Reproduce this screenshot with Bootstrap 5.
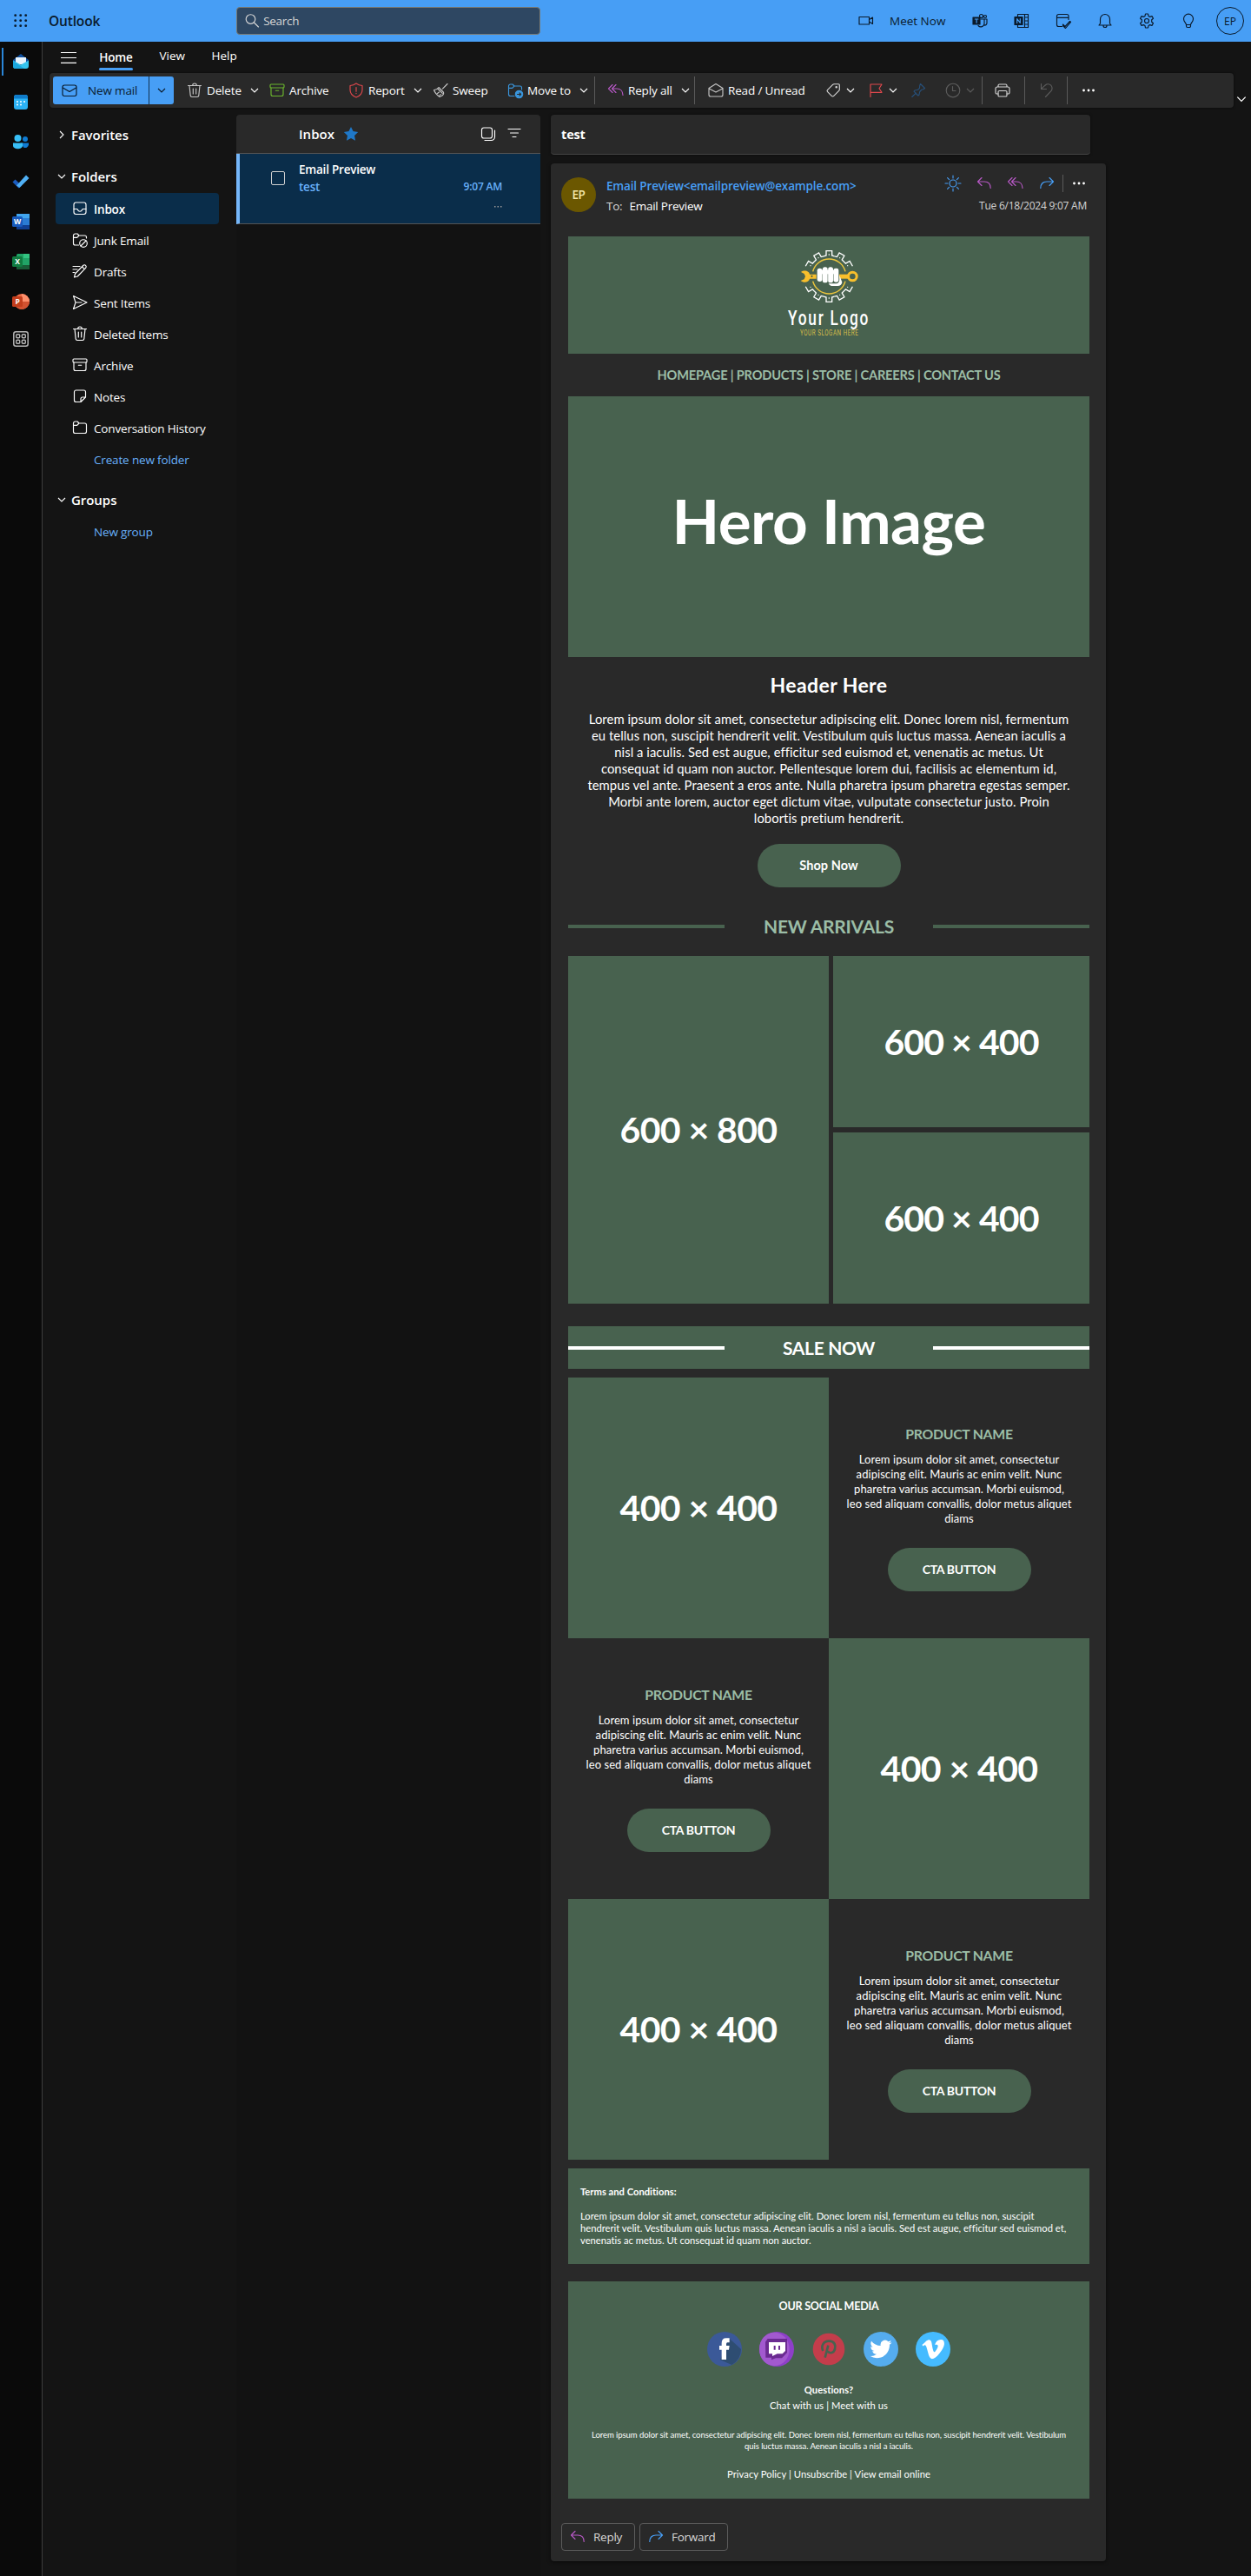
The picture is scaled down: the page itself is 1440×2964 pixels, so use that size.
<!DOCTYPE html>
<html lang="en">
<head>
<meta charset="utf-8">
<meta name="viewport" content="width=device-width, initial-scale=1">
<title>Outlook</title>
<link rel="stylesheet" href="https://cdn.jsdelivr.net/npm/bootstrap@5.3.0/dist/css/bootstrap.min.css">
<style>
body{background:#141414;color:#fff;font-family:"Open Sans","Noto Sans",sans-serif;font-size:13.5px;line-height:20px;letter-spacing:-.16px;width:1440px;height:2964px;overflow:hidden}
svg{flex:none;display:block}
.t{white-space:nowrap;display:inline-block}
.semi{font-weight:600}
.ico{width:20px;height:20px;fill:none;stroke:currentColor;stroke-width:1.15;stroke-linecap:round;stroke-linejoin:round}
.chev{width:12px;height:12px;fill:none;stroke:currentColor;stroke-width:1.1}
.chev-lg{width:14px;height:14px;margin:23px 0 0 2px}
.blu{color:#479ef5}.lblu{color:#68b0fa}.pur{color:#b658c4}.red{color:#e0484d}.grn{color:#6bb52e}
.gry{color:#c4c4c4}.txt2{color:#d6d6d6}.off{color:#5c5c5c}.offblu{color:#27507a}.mov{color:#3a96dd}

.topbar{height:48px;background:#479ef5;color:#0a1a2b}
.waffle{margin-left:16px}
.brand{font-size:15.5px;font-weight:600;margin-left:24px}
.searchbox{width:350px;height:32px;margin-left:157px;background:#2e4762;border:1px solid #7a7a72;border-radius:4px;color:#d6d6d6;letter-spacing:-.29px}
.searchbox .ico{margin:0 3px 0 7px}
.topicons{width:453px;display:grid;grid-template-columns:37px 80px repeat(7,48px);letter-spacing:0}
.me{width:32px;height:32px;border:1px solid #0a1a2b;border-radius:50%;font-size:12px;padding-top:2px}

.rail{width:49px;height:2916px;background:#0a0a0a;border-right:1px solid #3d3d3d}
.rail>div{height:46px}
.rail>div:last-child{height:40px}
.rail text{font-size:8.5px;font-weight:700;fill:#fff;text-anchor:middle}
.railmark{width:2px;height:32px;background:#2a86d8;margin-left:2px;margin-right:10px}

.tabs{height:36px;padding-left:21px}
.tab-on{margin-left:26px;padding-top:7px;width:39px;font-weight:600;line-height:16px}
.tab-on i{height:3px;width:39px;background:#479ef5;border-radius:2px;margin-top:4px}
.tab-off{margin:-4px 0 0 30.5px;letter-spacing:0}
.ribbon{width:1363px;height:40px;margin-left:8px;background:#292929;border-radius:4px;box-shadow:0 0 3px rgba(0,0,0,.6)}
.newmail{width:139px;height:32px;margin:4px 15px 4px 4px;background:#479ef5;color:#0a1a2b;border-radius:3px}
.newmail .t{margin-left:11px}
.newmail>.ico{margin-left:9px}
.nm-split{border-left:1px solid #12324f;width:29px;height:32px}
.tools{display:grid;grid-template-columns:95px 91px 97px 86px 100px 16px 99px 16px 135px 49px 49px 40px 42px 15px 34px 17px 32px 16px 20px;height:36px;padding-top:4px}
.tool{display:flex;align-items:center;height:32px;gap:4px;margin-left:-1px}
.tool .t+.chev{margin-left:5px}
.vsep{border-left:1px solid #5a5a5a;height:32px}

.folders{width:223px;padding-top:5px}
.fhead{font-weight:600;font-size:15px;height:36px;padding-left:16px;gap:5px;letter-spacing:-.05px}
.fhead-2{margin:12px 0 1px}
.fhead-3{margin-top:11px}
.frow{height:36px;width:188px;margin-left:15px;padding-left:18px;gap:6px;border-radius:4px}
.frow .t,.flink .t{padding-top:2px}
.frow.sel{background:#0a2d4a;font-weight:600}
.flink{height:36px;margin-left:59px;color:#68b0fa}

.mlist{width:350px;height:2832px;background:#121212}
.mhead{height:45px;background:#292929;border-bottom:1px solid #545454;border-radius:4px 4px 0 0;padding-left:72px}
.mhead .t{font-size:15px;font-weight:600;letter-spacing:.03px}
.star{margin-left:10px;margin-right:139px}
.mrow{height:81px;background:#0a2d4a;border-left:4px solid #75b6f9;border-bottom:1px solid #545454}
.mbody{padding:8px 44px 0 0;letter-spacing:-.22px}
.mtime{font-size:12px}
.more{color:#9a9a9a;padding-top:11px}
.cbox{width:16px;height:16px;border:1px solid #d0d0d0;border-radius:2px;margin:20px 16px 0 36px}

.reader{margin-left:12px}
.subj{width:621px;height:46px;background:#292929;border-bottom:1px solid #454545;border-radius:4px;box-shadow:0 0 3px rgba(0,0,0,.5);padding-left:12px;font-weight:700;font-size:14.5px}
.msg{width:639px;height:2759px;margin-top:10px;background:#292929;border-radius:4px;box-shadow:0 1px 4px rgba(0,0,0,.6)}
.msghead{height:84px;padding:16px 22px 0 12px}
.who{width:40px;height:40px;border-radius:50%;background:#6b5700;color:#f5e8a8;font-weight:600;letter-spacing:-.4px}
.fromto{margin-left:12px}
.fromline{height:20px}
.toline{height:26px;letter-spacing:-.24px}
.acts{gap:16px;margin:-6px -1px 0 0}
.acts i{width:1px;height:20px;background:#5a5a5a;margin:0 -8px}

.mail{width:600px;margin-left:20px;font-family:Lato,"Open Sans",sans-serif;letter-spacing:.06px}
.g{background:#48624f}
.lg{color:#9bbda6}
.hdr{height:135px;padding-top:8px}
.hdr svg{margin-left:2px}
.navl{height:49px;font-size:14.6px;letter-spacing:-.18px}
.hero{height:300px;font-size:71px;letter-spacing:-.5px;padding-bottom:15px}
.ttl{height:62px;font-size:23px;line-height:65px;letter-spacing:.4px}
.bodyp{height:153px;font-size:14.8px;line-height:19px;letter-spacing:.07px}
.cta{width:165px;height:50px;border-radius:25px;font-size:14px;font-weight:700;letter-spacing:-.3px}
.cta.shop{font-size:14.5px;letter-spacing:.08px}
.rule{width:180px;height:4px;background:#48624f}
.arr{height:79px;padding-top:11px;font-size:21px;letter-spacing:-.22px}
.grid4{height:400px}
.ph{font-size:41px;font-weight:700;letter-spacing:-.6px}
.half{width:300px}
.tile{width:295px;height:197px;letter-spacing:-.93px}
.sale{height:49px;margin:26px 0 10px;font-size:21px;letter-spacing:-.35px}
.sale .rule{background:#fff}
.prod{height:300px}
.prod>div{width:300px;height:300px}
.pname{font-size:15.8px;height:22px;line-height:22px;margin-top:54px;font-weight:700;letter-spacing:-.25px}
.pdesc{font-size:13px;line-height:17px;margin-top:10px;height:110px}
.terms{height:110px;margin-top:10px;padding:20px 14px;font-size:11.2px;line-height:14px;letter-spacing:.01px}
.foot{height:250px;margin-top:20px;padding-top:20px;font-size:11.2px;line-height:18px}
.ourm{font-size:12.5px;letter-spacing:-.2px}
.soc{gap:20px;margin:20px 0 18px}
.fine{font-size:9.5px;line-height:13px;margin:18px 0 17px;letter-spacing:-.06px}
.answer{margin:28px 0 0 12px;gap:5px}
.btn-o{width:85px;height:32px;border:1px solid #5c5c5c;border-radius:4px;color:#d6d6d6;padding-left:8px;gap:8px;letter-spacing:-.25px}
.btn-o.wide{width:102px}
</style>
</head>
<body>
<svg width="0" height="0" class="position-absolute">
<symbol id="mailI" viewBox="0 0 20 20"><rect x="2" y="4" width="16" height="12.5" rx="2.2"/><path d="M2.3 7l7.7 4.4L17.7 7"/></symbol>
<symbol id="dn" viewBox="0 0 12 12"><path d="M2 4l4 4 4-4"/></symbol>
<symbol id="rt" viewBox="0 0 12 12"><path d="M4 2l4 4-4 4"/></symbol>
<symbol id="trash" viewBox="0 0 20 20"><path d="M2.5 4.500h15M7.700 4.300a2.300 2.300 0 014.600 0M4 4.500l1.200 11.400a1.800 1.800 0 001.800 1.600h6a1.800 1.800 0 001.800-1.600L16 4.500M8.300 8v6M11.700 8v6"/></symbol>
<symbol id="arch" viewBox="0 0 20 20"><rect x="2" y="3" width="16" height="4" rx="1"/><path d="M3 7v7.500a2 2 0 002 2h10a2 2 0 002-2V7M8.300 10.200h3.400"/></symbol>
<symbol id="rep" viewBox="0 0 20 20"><path d="M10 2c2 1.500 4.300 2.300 7 2.500v5c0 4-2.300 6.700-7 8.500-4.700-1.800-7-4.500-7-8.500v-5C5.700 4.300 8 3.500 10 2zM10 6.500v4.700M10 13.300v.3"/></symbol>
<symbol id="sweep" viewBox="0 0 20 20"><path d="M18 2.500l-5.500 5.700M8 6.500l5.300 5.500c1.200 2-1 4.500-4.300 5.500C6.500 15.500 3.500 13 2.500 9.500 4.500 9.700 6.500 8.500 8 6.500zM6.800 8l5.400 5.400M6.500 13.500l2-1.500M9 16l1.200-1.500"/></symbol>
<symbol id="move" viewBox="0 0 20 20"><path d="M9 16.500H4.500A2 2 0 012.500 14.500v-9.500a2 2 0 012-2H7l2 2h6.500a2 2 0 012 2V9M2.500 7.300h4.200L9 5"/><circle cx="14.500" cy="14.500" r="4.200" fill="currentColor"/><path d="M12.500 14.500h4M15 12.900l1.600 1.600-1.600 1.600" stroke="#292929"/></symbol>
<symbol id="rply" viewBox="0 0 20 20"><path d="M7 3.500L2.500 8 7 12.500M2.700 8H10c4.500 0 7.200 3 7.200 7.500"/></symbol>
<symbol id="rall" viewBox="0 0 20 20"><path d="M6 3.500L1.500 8 6 12.500M10 3.500L5.500 8l4.500 4.500M5.700 8H11c4.200 0 7 3 7 7.500"/></symbol>
<symbol id="fwd" viewBox="0 0 20 20"><path d="M13 3.500L17.500 8 13 12.500M17.300 8H10c-4.500 0-7.200 3-7.200 7.500"/></symbol>
<symbol id="openm" viewBox="0 0 20 20"><path d="M2 7.500L10 2.500l8 5V15a2 2 0 01-2 2H4a2 2 0 01-2-2zM2.300 8L10 12l7.700-4"/></symbol>
<symbol id="tag" viewBox="0 0 20 20"><path d="M11 2.700h5.300a1 1 0 011 1V9a2 2 0 01-.6 1.400l-6 6a1.700 1.700 0 01-2.400 0L3.600 11.700a1.700 1.700 0 010-2.400l6-6A2 2 0 0111 2.700z"/><circle cx="13.700" cy="6.300" r=".7" fill="currentColor"/></symbol>
<symbol id="flag" viewBox="0 0 20 20"><path d="M4 17.500V3h13l-3 4.700 3 4.600H4"/></symbol>
<symbol id="pin" viewBox="0 0 20 20"><path d="M12.500 2.500l5 5-1.600 1.200-2.200.6-2 2.200-.7 3.500-1.200 1L5 11.200l1-1.200 3.500-.7 2-2 .2-2.800zM7.300 13.200L2.800 17.500"/></symbol>
<symbol id="clock" viewBox="0 0 20 20"><circle cx="10" cy="10" r="7.800"/><path d="M9.500 5.500V10.500H13"/></symbol>
<symbol id="print" viewBox="0 0 20 20"><path d="M5 6V4.500a1.500 1.500 0 011.500-1.500h7A1.500 1.500 0 0115 4.500V6M5 14H3.500A1.500 1.500 0 012 12.500v-4.500A2 2 0 014 6h12a2 2 0 012 2v4.500a1.500 1.500 0 01-1.500 1.500H15"/><rect x="5" y="10.500" width="10" height="6.500" rx="1.300"/></symbol>
<symbol id="undo" viewBox="0 0 20 20"><path d="M3.500 2.500v6h6M3.800 8.200L8 4.200c2-1.800 5-1.700 6.700 0s1.900 4.800 0 6.700L8.500 17.500"/></symbol>
<symbol id="dots" viewBox="0 0 20 20"><g fill="currentColor" stroke="none"><circle cx="4.500" cy="10" r="1.400"/><circle cx="10" cy="10" r="1.400"/><circle cx="15.500" cy="10" r="1.400"/></g></symbol>
<symbol id="sun" viewBox="0 0 20 20"><circle cx="10" cy="10" r="4"/><path d="M10 1v3M10 16v3M1 10h3M16 10h3M3.600 3.600l2 2M14.400 14.400l2 2M3.600 16.400l2-2M14.400 5.600l2-2"/></symbol>
<symbol id="inbox" viewBox="0 0 20 20"><rect x="3" y="3" width="14" height="13.500" rx="2.400"/><path d="M3 10.500h3.500c.5 0 .8.500 1 1 .4 1 1.300 1.700 2.500 1.700s2.100-.7 2.500-1.700c.2-.5.500-1 1-1H17"/></symbol>
<symbol id="fold" viewBox="0 0 20 20"><path d="M2.500 5a2 2 0 012-2H7l2 2h6.500a2 2 0 012 2v7.500a2 2 0 01-2 2h-11a2 2 0 01-2-2zM2.500 7.300h4.200L9 5"/></symbol>
<symbol id="junk" viewBox="0 0 20 20"><path d="M8.500 16H4.500A2 2 0 012.500 14V5a2 2 0 012-2H7l2 2h6.500a2 2 0 012 2v1M2.500 7.300h4.200L9 5"/><circle cx="14" cy="14" r="4.300"/><path d="M11 17l6-6"/></symbol>
<symbol id="draft" viewBox="0 0 20 20"><path d="M3.500 17l1-4L13.700 3.500a1.900 1.900 0 012.900 2.800L7.300 16zM12.500 5l2.800 2.700M2 4.500h8M2 8h5M2 11.500h2"/></symbol>
<symbol id="sent" viewBox="0 0 20 20"><path d="M2.500 2.500L18 10 2.500 17.500 5 10zM5 10h7"/></symbol>
<symbol id="note" viewBox="0 0 20 20"><path d="M3.500 5a2 2 0 012-2h9a2 2 0 012 2v6l-5.500 5.500H5.500a2 2 0 01-2-2zM16.500 11H13a2 2 0 00-2 2v3.500"/></symbol>
</svg>

<header class="topbar d-flex align-items-center">
  <svg class="waffle" width="16" height="16" viewBox="0 0 16 16" fill="#0a1a2b"><g id="dr"><circle cx="1.700" cy="1.700" r="1.400"/><circle cx="7.700" cy="1.700" r="1.400"/><circle cx="13.700" cy="1.700" r="1.400"/></g><use href="#dr" y="6"/><use href="#dr" y="12"/></svg>
  <span class="t brand">Outlook</span>
  <div class="searchbox d-flex align-items-center">
    <svg class="ico" viewBox="0 0 20 20"><circle cx="8.500" cy="8" r="5.300"/><path d="M12.500 12l5 5"/></svg>
    <span class="t">Search</span>
  </div>
  <div class="topicons ms-auto align-items-center">
    <svg class="ico" viewBox="0 0 20 20"><rect x="2" y="5.500" width="11.500" height="8.500"/><path d="M13.500 8.500l4-2.500v7.500l-4-2.500"/></svg>
    <span class="t">Meet Now</span>
    <svg class="ico mx-auto" viewBox="0 0 20 20"><rect x="2" y="6" width="8" height="8" fill="#0a1a2b"/><path d="M4.300 8h3.600M6.100 8v4.200" stroke="#479ef5"/><circle cx="11.500" cy="4.500" r="2"/><circle cx="16" cy="5" r="1.500"/><path d="M11 8h4v5a4 4 0 01-7 2.500M15 8h3v4.500a2.500 2.500 0 01-3 2.500"/></svg>
    <svg class="ico mx-auto" viewBox="0 0 20 20"><path d="M5.500 5V2.500h12v15h-12V15M13.500 2.500v15M13.500 6h4M13.500 10h4M13.500 14h4"/><rect x="2" y="5.500" width="9" height="9" fill="#0a1a2b"/><path d="M4.700 12.400V7.600l3.600 4.800V7.600" stroke="#479ef5"/></svg>
    <svg class="ico mx-auto" viewBox="0 0 20 20"><path d="M8.500 16.500h-4a2 2 0 01-2-2v-10a2 2 0 012-2h9.500a2 2 0 012 2v4M2.500 6.300H16M9.500 14l2.500 2.500 5.500-6 1 .8L12.500 18.500 9.500 15.500z"/></svg>
    <svg class="ico mx-auto" viewBox="0 0 20 20"><path d="M4.500 13V8a5.500 5.500 0 0111 0v5l1.500 2H3zM8 15.500a2 2 0 004 0"/></svg>
    <svg class="ico mx-auto" viewBox="0 0 20 20"><circle cx="10" cy="10" r="2.500"/><path d="M8.500 2h3l.5 2.400 1.700 1 2.300-.8 1.500 2.600-1.800 1.600v2.400l1.800 1.600-1.500 2.600-2.300-.8-1.700 1-.5 2.400h-3L8 15.600l-1.700-1-2.300.8-1.500-2.600 1.800-1.600V8.800L2.500 7.200 4 4.600l2.300.8 1.700-1z"/></svg>
    <svg class="ico mx-auto" viewBox="0 0 20 20"><path d="M7.500 14.500c0-2-3-3.300-3-6.800a5.500 5.500 0 0111 0c0 3.500-3 4.800-3 6.800zM7.500 14.500V16a1.500 1.500 0 001.500 1.500h2A1.500 1.500 0 0012.500 16v-1.500"/></svg>
    <div class="me d-flex align-items-center justify-content-center mx-auto"><span class="t">EP</span></div>
  </div>
</header>

<div class="d-flex">
  <nav class="rail">
    <div class="d-flex align-items-center"><i class="railmark"></i><svg width="20" height="20" viewBox="0 0 20 20"><path d="M1 8l9-7 9 7v4H1z" fill="#0f4f9e"/><path d="M4 5h12v8H4z" fill="#e8f4fd"/><path d="M1 8.500l9 5 9-5V15a3 3 0 01-3 3H4a3 3 0 01-3-3z" fill="#35c5f0"/><path d="M1 9l13 9H4a3 3 0 01-3-3z" fill="#1ba8e0"/></svg></div>
    <div class="d-flex align-items-center justify-content-center"><svg width="18" height="18" viewBox="0 0 18 18"><rect x="1" y="1" width="16" height="17" rx="3" fill="#2bb2f5"/><path d="M1 5.500V4a3 3 0 013-3h10a3 3 0 013 3v1.500z" fill="#0f7bc9"/><g fill="#fff"><circle cx="5" cy="9" r="1"/><circle cx="9" cy="9" r="1"/><circle cx="13" cy="9" r="1"/><circle cx="5" cy="12.500" r="1"/><circle cx="9" cy="12.500" r="1"/></g></svg></div>
    <div class="d-flex align-items-center justify-content-center"><svg width="20" height="18" viewBox="0 0 20 18"><circle cx="6.500" cy="5" r="4" fill="#38c0f8"/><circle cx="15" cy="6" r="3" fill="#0f7bd2"/><path d="M10 10.500h9v2a4 4 0 01-6 3z" fill="#0f7bd2"/><path d="M1 10.500h11v3c0 5-11 5-11 0z" fill="#38c0f8"/></svg></div>
    <div class="d-flex align-items-center justify-content-center"><svg width="20" height="16" viewBox="0 0 20 16"><path d="M.5 8.500L3.500 5.500 11 12.500 7.500 15.500z" fill="#1b5cbf"/><path d="M5 12.500L16 .5 19.500 4 8.500 15z" fill="#50b0f5"/></svg></div>
    <div class="d-flex align-items-center justify-content-center"><svg width="20" height="20" viewBox="0 0 20 20"><rect x="5" y="1" width="15" height="18" rx="1.500" fill="#2b7cd3"/><path d="M5 1h15v5H5z" fill="#41a5ee"/><path d="M5 14h15v5H5z" fill="#103f91"/><rect x="0" y="4" width="12" height="12" rx="1.500" fill="#185abd"/><text x="6" y="13">W</text></svg></div>
    <div class="d-flex align-items-center justify-content-center"><svg width="20" height="20" viewBox="0 0 20 20"><rect x="5" y="1" width="15" height="18" rx="1.500" fill="#21a366"/><path d="M13 1h7v5h-7z" fill="#33c481"/><path d="M5 14h15v5H5z" fill="#185c37"/><rect x="0" y="4" width="12" height="12" rx="1.500" fill="#107c41"/><text x="6" y="13">X</text></svg></div>
    <div class="d-flex align-items-center justify-content-center"><svg width="20" height="20" viewBox="0 0 20 20"><circle cx="11" cy="10" r="9" fill="#ed6c47"/><path d="M11 1a9 9 0 019 9h-9z" fill="#ff8f6b"/><path d="M3 14a9 9 0 0017-4h-9z" fill="#d35230"/><rect x="0" y="4" width="12" height="12" rx="1.500" fill="#c43e1c"/><text x="6" y="13">P</text></svg></div>
    <div class="d-flex align-items-center justify-content-center"><svg width="18" height="18" viewBox="0 0 18 18" fill="none" stroke="#b5b5b5"><rect x=".8" y=".8" width="16.400" height="16.400" rx="2.500" stroke-width="1.500"/><g stroke-width="1.400"><rect x="3.700" y="3.700" width="4" height="4" rx="1"/><rect x="10.300" y="3.700" width="4" height="4" rx="1"/><rect x="3.700" y="10.300" width="4" height="4" rx="1"/><rect x="10.300" y="10.300" width="4" height="4" rx="1"/></g></svg></div>
  </nav>

  <div>
    <div class="tabs d-flex align-items-center">
      <svg width="18" height="14" viewBox="0 0 18 14" stroke="#fff" stroke-width="1.200"><path d="M0 1.500h18M0 7.500h18M0 13.300h18"/></svg>
      <div class="tab-on d-flex flex-column align-items-center"><span class="t">Home</span><i></i></div>
      <span class="t tab-off">View</span>
      <span class="t tab-off">Help</span>
    </div>

    <div class="d-flex">
    <div class="ribbon d-flex">
      <div class="newmail d-flex align-items-center">
        <svg class="ico"><use href="#mailI"/></svg><span class="t">New mail</span>
        <div class="nm-split ms-auto d-flex align-items-center justify-content-center"><svg class="chev"><use href="#dn"/></svg></div>
      </div>
      <div class="tools">
        <div class="tool"><svg class="ico gry"><use href="#trash"/></svg><span class="t">Delete</span><svg class="chev"><use href="#dn"/></svg></div>
        <div class="tool"><svg class="ico grn"><use href="#arch"/></svg><span class="t">Archive</span></div>
        <div class="tool"><svg class="ico red"><use href="#rep"/></svg><span class="t">Report</span><svg class="chev"><use href="#dn"/></svg></div>
        <div class="tool"><svg class="ico gry"><use href="#sweep"/></svg><span class="t">Sweep</span></div>
        <div class="tool"><svg class="ico mov"><use href="#move"/></svg><span class="t">Move to</span><svg class="chev"><use href="#dn"/></svg></div>
        <div class="vsep"></div>
        <div class="tool"><svg class="ico pur"><use href="#rall"/></svg><span class="t">Reply all</span><svg class="chev"><use href="#dn"/></svg></div>
        <div class="vsep"></div>
        <div class="tool"><svg class="ico gry"><use href="#openm"/></svg><span class="t">Read / Unread</span></div>
        <div class="tool"><svg class="ico txt2"><use href="#tag"/></svg><svg class="chev"><use href="#dn"/></svg></div>
        <div class="tool"><svg class="ico red"><use href="#flag"/></svg><svg class="chev"><use href="#dn"/></svg></div>
        <div class="tool"><svg class="ico offblu"><use href="#pin"/></svg></div>
        <div class="tool off"><svg class="ico"><use href="#clock"/></svg><svg class="chev"><use href="#dn"/></svg></div>
        <div class="vsep"></div>
        <div class="tool"><svg class="ico txt2"><use href="#print"/></svg></div>
        <div class="vsep"></div>
        <div class="tool off"><svg class="ico"><use href="#undo"/></svg></div>
        <div class="vsep"></div>
        <div class="tool"><svg class="ico"><use href="#dots"/></svg></div>
      </div>
    </div>
    <svg class="chev chev-lg"><use href="#dn"/></svg>
    </div>

    <div class="d-flex pt-2">
      <aside class="folders">
        <div class="fhead d-flex align-items-center"><svg class="chev"><use href="#rt"/></svg><span class="t">Favorites</span></div>
        <div class="fhead fhead-2 d-flex align-items-center"><svg class="chev"><use href="#dn"/></svg><span class="t">Folders</span></div>
        <div class="frow sel d-flex align-items-center"><svg class="ico"><use href="#inbox"/></svg><span class="t">Inbox</span></div>
        <div class="frow d-flex align-items-center"><svg class="ico"><use href="#junk"/></svg><span class="t">Junk Email</span></div>
        <div class="frow d-flex align-items-center"><svg class="ico"><use href="#draft"/></svg><span class="t">Drafts</span></div>
        <div class="frow d-flex align-items-center"><svg class="ico"><use href="#sent"/></svg><span class="t">Sent Items</span></div>
        <div class="frow d-flex align-items-center"><svg class="ico"><use href="#trash"/></svg><span class="t">Deleted Items</span></div>
        <div class="frow d-flex align-items-center"><svg class="ico"><use href="#arch"/></svg><span class="t">Archive</span></div>
        <div class="frow d-flex align-items-center"><svg class="ico"><use href="#note"/></svg><span class="t">Notes</span></div>
        <div class="frow d-flex align-items-center"><svg class="ico"><use href="#fold"/></svg><span class="t">Conversation History</span></div>
        <div class="flink d-flex align-items-center"><span class="t">Create new folder</span></div>
        <div class="fhead fhead-3 d-flex align-items-center"><svg class="chev"><use href="#dn"/></svg><span class="t">Groups</span></div>
        <div class="flink d-flex align-items-center"><span class="t">New group</span></div>
      </aside>

      <section class="mlist">
        <div class="mhead d-flex align-items-center">
          <span class="t">Inbox</span>
          <svg class="star" width="18" height="18" viewBox="0 0 20 20" fill="#1f78c8"><path d="M10 1l2.800 5.800 6.300.9-4.600 4.500 1.100 6.300-5.600-3-5.600 3 1.100-6.300L.9 7.700l6.300-.9z"/></svg>
          <svg class="ico" viewBox="0 0 20 20"><rect x="2.500" y="3" width="12" height="12" rx="2.500"/><path d="M6 17.500h7.500a4 4 0 004-4V6"/></svg>
          <svg class="ico ms-2 me-auto ps-0" style="margin-left:12px" viewBox="0 0 20 20"><path d="M5 4.500h14M7.500 9h9M10 13.500h4"/></svg>
        </div>
        <div class="mrow d-flex">
          <div class="cbox"></div>
          <div class="mbody flex-grow-1">
            <div class="semi"><span class="t">Email Preview</span></div>
            <div class="d-flex justify-content-between lblu semi"><span class="t">test</span><span class="t mtime">9:07 AM</span></div>
            <div class="more d-flex justify-content-end"><svg width="10" height="4" viewBox="0 0 10 4" fill="currentColor"><path d="M1 1h1.500v1.500H1zM4.500 1H6v1.500H4.500zM8 1h1.500v1.500H8z"/></svg></div>
          </div>
        </div>
      </section>

      <main class="reader">
        <div class="subj d-flex align-items-center"><span class="t">test</span></div>
        <article class="msg">
          <div class="msghead d-flex">
            <div class="who d-flex align-items-center justify-content-center"><span class="t">EP</span></div>
            <div class="fromto flex-grow-1">
              <div class="fromline d-flex align-items-center">
                <span class="t blu semi">Email Preview&lt;emailpreview@example.com&gt;</span>
                <div class="acts d-flex align-items-center ms-auto">
                  <svg class="ico blu"><use href="#sun"/></svg>
                  <svg class="ico pur"><use href="#rply"/></svg>
                  <svg class="ico pur"><use href="#rall"/></svg>
                  <svg class="ico blu"><use href="#fwd"/></svg>
                  <i></i>
                  <svg class="ico"><use href="#dots"/></svg>
                </div>
              </div>
              <div class="toline d-flex align-items-center">
                <span class="t txt2">To:</span><span class="t ms-2">Email Preview</span>
                <span class="t ms-auto txt2 mtime">Tue 6/18/2024 9:07 AM</span>
              </div>
            </div>
          </div>

          <div class="mail">
            <div class="hdr g d-flex justify-content-center">
              <svg width="130" height="120" viewBox="0 0 390 360">
                <g transform="translate(193 114)" fill="none">
                  <g id="half" stroke="#fff" stroke-width="4"><path id="tooth" d="M-18.600 -69.600L-10 -72V-88H10V-72L18.600 -69.600"/><use href="#tooth" transform="rotate(30)"/><use href="#tooth" transform="rotate(-30)"/><path d="M-18.600 -69.600L-10 -72V-88H10" transform="rotate(60)"/><path d="M18.600 -69.600L10 -72V-88H-10" transform="rotate(-60)"/><path d="M-56 -17A58 58 0 0156 -17" stroke="#ecc63c" stroke-width="4.500"/><g fill="#fff" stroke="none"><circle cy="-75" r="2.500"/><circle cx="37" cy="-64" r="2"/><circle cx="-37" cy="-64" r="2"/><circle cx="64" cy="-37" r="2"/><circle cx="-64" cy="-37" r="2"/></g></g>
                  <use href="#half" transform="scale(1 -1)"/>
                  <path d="M-97 -15C-85 -24-68 -18-67 -7H-44V8H-67C-70 20-86 25-98 15L-86 10-82 0-86 -9z" fill="#f8bf2c"/>
                  <path d="M-62 -4h5v7h-5zM54 -4h5v7h-5z" fill="#48624f"/><path d="M35 -7H66V8H35z" fill="#f8bf2c"/><circle cx="81" r="14.500" stroke="#f8bf2c" stroke-width="9"/>
                  <g fill="#fff"><rect x="-41" y="-28" width="17.500" height="46" rx="8"/><rect x="-22.500" y="-32" width="17.500" height="54" rx="8"/><rect x="-3.500" y="-32" width="17.500" height="54" rx="8"/><rect x="15.500" y="-28" width="17.500" height="48" rx="7"/><path d="M-38 -22H30V-8H-38z"/><path d="M36 -4L45 20Q42 33 30 33H8Q2 33-2 25H26Q36 22 36 8z"/></g>
                </g>
                <g font-family="Roboto" transform="scale(.7 1)">
                  <text x="73" y="282" font-size="74" font-weight="500" fill="#fff" textLength="396">Your Logo</text>
                  <text x="133" y="318" font-size="27" fill="#d9bd4a" textLength="286">YOUR SLOGAN HERE</text>
                </g>
              </svg>
            </div>
            <div class="navl d-flex align-items-center justify-content-center lg fw-bold"><span class="t">HOMEPAGE | PRODUCTS | STORE | CAREERS | CONTACT US</span></div>
            <div class="hero g d-flex align-items-center justify-content-center fw-bold"><span class="t">Hero Image</span></div>
            <div class="ttl text-center fw-bold"><span class="t">Header Here</span></div>
            <div class="bodyp text-center"><span class="t">Lorem ipsum dolor sit amet, consectetur adipiscing elit. Donec lorem nisl, fermentum<br>eu tellus non, suscipit hendrerit velit. Vestibulum quis luctus massa. Aenean iaculis a<br>nisl a iaculis. Sed est augue, efficitur sed euismod et, venenatis ac metus. Ut<br>consequat id quam non auctor. Pellentesque lorem dui, facilisis ac elementum id,<br>tempus vel ante. Praesent a eros ante. Nulla pharetra ipsum pharetra egestas semper.<br>Morbi ante lorem, auctor eget dictum vitae, vulputate consectetur justo. Proin<br>lobortis pretium hendrerit.</span></div>
            <div class="cta shop g mx-auto d-flex align-items-center justify-content-center"><span class="t">Shop Now</span></div>
            <div class="arr d-flex align-items-center justify-content-between lg fw-bold"><div class="rule"></div><span class="t">NEW ARRIVALS</span><div class="rule"></div></div>
            <div class="grid4 d-flex justify-content-between ph">
              <div class="half g d-flex align-items-center justify-content-center"><span class="t">600 × 800</span></div>
              <div class="d-flex flex-column justify-content-between">
                <div class="tile g d-flex align-items-center justify-content-center"><span class="t">600 × 400</span></div>
                <div class="tile g d-flex align-items-center justify-content-center"><span class="t">600 × 400</span></div>
              </div>
            </div>
            <div class="sale g d-flex align-items-center justify-content-between fw-bold"><div class="rule"></div><span class="t">SALE NOW</span><div class="rule"></div></div>

            <div class="prod d-flex">
              <div class="g ph d-flex align-items-center justify-content-center"><span class="t">400 × 400</span></div>
              <div class="text-center"><div class="pname lg">PRODUCT NAME</div><div class="pdesc"><span class="t">Lorem ipsum dolor sit amet, consectetur<br>adipiscing elit. Mauris ac enim velit. Nunc<br>pharetra varius accumsan. Morbi euismod,<br>leo sed aliquam convallis, dolor metus aliquet<br>diams</span></div><div class="cta g mx-auto d-flex align-items-center justify-content-center"><span class="t">CTA BUTTON</span></div></div>
            </div>
            <div class="prod d-flex flex-row-reverse">
              <div class="g ph d-flex align-items-center justify-content-center"><span class="t">400 × 400</span></div>
              <div class="text-center"><div class="pname lg">PRODUCT NAME</div><div class="pdesc"><span class="t">Lorem ipsum dolor sit amet, consectetur<br>adipiscing elit. Mauris ac enim velit. Nunc<br>pharetra varius accumsan. Morbi euismod,<br>leo sed aliquam convallis, dolor metus aliquet<br>diams</span></div><div class="cta g mx-auto d-flex align-items-center justify-content-center"><span class="t">CTA BUTTON</span></div></div>
            </div>
            <div class="prod d-flex">
              <div class="g ph d-flex align-items-center justify-content-center"><span class="t">400 × 400</span></div>
              <div class="text-center"><div class="pname lg">PRODUCT NAME</div><div class="pdesc"><span class="t">Lorem ipsum dolor sit amet, consectetur<br>adipiscing elit. Mauris ac enim velit. Nunc<br>pharetra varius accumsan. Morbi euismod,<br>leo sed aliquam convallis, dolor metus aliquet<br>diams</span></div><div class="cta g mx-auto d-flex align-items-center justify-content-center"><span class="t">CTA BUTTON</span></div></div>
            </div>

            <div class="terms g"><div class="fw-bold mb-3">Terms and Conditions:</div><span class="t" style="margin-top:-2px">Lorem ipsum dolor sit amet, consectetur adipiscing elit. Donec lorem nisl, fermentum eu tellus non, suscipit<br>hendrerit velit. Vestibulum quis luctus massa. Aenean iaculis a nisl a iaculis. Sed est augue, efficitur sed euismod et,<br>venenatis ac metus. Ut consequat id quam non auctor.</span></div>

            <div class="foot g text-center">
              <div class="ourm fw-bold">OUR SOCIAL MEDIA</div>
              <div class="soc d-flex justify-content-center">
                <svg width="40" height="40" viewBox="0 0 120 120"><circle cx="60" cy="60" r="60" fill="#3b5998"/><path d="M75 22L117 60A60 60 0 0185 114L45 97z" fill="#2e4d72"/><path d="M50 96V62H42V48H50V39Q50 22 66 22H77V37H70Q66 37 66 42V48H77L75 62H66V96z" fill="#fff"/></svg>
                <svg width="40" height="40" viewBox="0 0 120 120"><circle cx="60" cy="60" r="60" fill="#8e3fc9"/><ellipse cx="52" cy="60" rx="52" ry="58" fill="#a259cf"/><path d="M21 35L29 24H96V72L78 91H57L42 97V89H22z" fill="#6b2b91"/><path d="M33 36H90V66L80 76H62L45 84V76H33z" fill="#fff"/><path d="M50 48H56V62H50zM66 48H72V62H66z" fill="#6b2b91"/></svg>
                <svg width="40" height="40" viewBox="0 0 120 120"><circle cx="60" cy="60" r="55" fill="#c43d4b"/><path d="M58 47L47 89M40 66C32 48 42 32 61 32S85 47 81 60 64 77 56 67" fill="none" stroke="#48624f" stroke-width="8"/></svg>
                <svg width="40" height="40" viewBox="0 0 120 120"><circle cx="60" cy="60" r="60" fill="#55acee"/><path transform="translate(22 22) scale(3.150)" fill="#fff" d="M23.950 4.570a10 10 0 01-2.820.770 4.960 4.960 0 002.160-2.720c-.95.550-2 .96-3.130 1.190a4.920 4.920 0 00-8.380 4.480C7.690 8.090 4.070 6.130 1.640 3.160a4.820 4.820 0 00-.67 2.480c0 1.710.87 3.210 2.190 4.100a4.900 4.900 0 01-2.230-.62v.06a4.920 4.920 0 003.950 4.830 5 5 0 01-2.210.080 4.940 4.940 0 004.600 3.420A9.870 9.870 0 010 19.540a13.990 13.990 0 007.560 2.210c9.050 0 14-7.500 14-13.980 0-.21 0-.42-.02-.63A9.940 9.940 0 0024 4.590z"/></svg>
                <svg width="40" height="40" viewBox="0 0 120 120"><circle cx="60" cy="60" r="60" fill="#45bbff"/><path transform="translate(22 22) scale(3.200)" fill="#fff" d="M23.980 6.420c-.11 2.340-1.740 5.540-4.900 9.600-3.260 4.250-6.030 6.370-8.290 6.370-1.410 0-2.580-1.290-3.550-3.870L5.320 11.400C4.600 8.820 3.830 7.530 3.010 7.530c-.18 0-.81.380-1.880 1.130L0 7.200c1.190-1.040 2.350-2.080 3.500-3.130C5.080 2.700 6.270 1.990 7.060 1.910c1.870-.18 3.020 1.100 3.450 3.840.47 2.960.79 4.800.97 5.510.54 2.450 1.130 3.670 1.780 3.670.5 0 1.260-.8 2.270-2.390 1-1.590 1.540-2.800 1.610-3.630.14-1.370-.4-2.060-1.610-2.060-.57 0-1.170.13-1.770.38 1.180-3.870 3.430-5.740 6.770-5.630 2.470.06 3.640 1.660 3.490 4.820z"/></svg>
              </div>
              <div class="fw-bold">Questions?</div>
              <div>Chat with us | Meet with us</div>
              <div class="fine"><span class="t">Lorem ipsum dolor sit amet, consectetur adipiscing elit. Donec lorem nisl, fermentum eu tellus non, suscipit hendrerit velit. Vestibulum<br>quis luctus massa. Aenean iaculis a nisl a iaculis.</span></div>
              <div>Privacy Policy | Unsubscribe | View email online</div>
            </div>
          </div>

          <div class="answer d-flex">
            <div class="btn-o d-flex align-items-center"><svg class="ico pur"><use href="#rply"/></svg><span class="t">Reply</span></div>
            <div class="btn-o wide d-flex align-items-center"><svg class="ico blu"><use href="#fwd"/></svg><span class="t">Forward</span></div>
          </div>
        </article>
      </main>
    </div>
  </div>
</div>
<script src="https://cdn.jsdelivr.net/npm/bootstrap@5.3.0/dist/js/bootstrap.bundle.min.js"></script>
</body>
</html>
